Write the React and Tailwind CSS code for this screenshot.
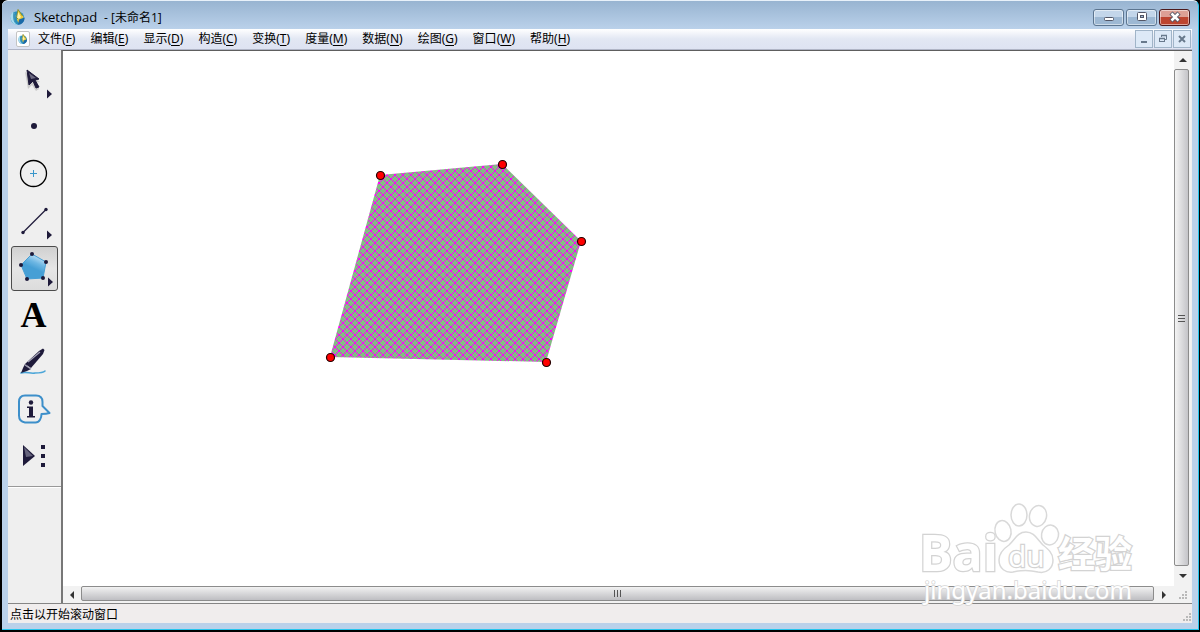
const menus = [
  ["文件", "F"],
  ["编辑", "E"],
  ["显示", "D"],
  ["构造", "C"],
  ["变换", "T"],
  ["度量", "M"],
  ["数据", "N"],
  ["绘图", "G"],
  ["窗口", "W"],
  ["帮助", "H"],
];

const points = [[317, 124], [439, 113], [518, 190], [483, 311], [267, 306]];

const INK = "#1e1a3a";

function DropLogo({ size }) {
  return (
    <svg width={size} height={size} viewBox="0 0 16 16" className="shrink-0">
      <circle cx="7.500" cy="9" r="6.800" fill="#2a8fbd" />
      <path d="M.5 8c0 4 3 8 7 8-3-2-4-5-2-9L3.500 2.500C1.500 4 .5 6 .5 8z" fill="#a9dcef" />
      <path d="M3.500 2.500L6 7c-1.500 3-1.500 6 0 8-2.500-2-3.500-6-2.500-12.500z" fill="#3c95b8" />
      <path d="M8 0l5 7c1.500 3 0 6-4 7C6.500 12 6 8 8 0z" fill="#efcb3a" />
      <path d="M8 3l3 5-3 2.500L6.500 8z" fill="#fff3a6" />
      <path d="M9 10.500l5.500-2c.3 4-2.500 7.200-6.500 7.300z" fill="#1a6aa8" />
      <path d="M8 .5L12.500 7M8 .5L6.500 9l2 1" stroke="#6b8137" strokeWidth=".8" fill="none" />
    </svg>
  );
}

// 工具按钮右下角的展开箭头
const more = <path d="M36 31.500l5 4.500-5 4.500z" fill={INK} />;

const tools = [
  {
    name: "移动箭头工具",
    icon: (
      <>
        <path d="M14 14l3 17 4-4 4 6 3-2-4-6 5-1z" fill="#888" opacity=".35" />
        <path d="M16 12l12 9-4 1 4 7-3 1-3-7-4 4z" fill={INK} stroke={INK} strokeLinejoin="round" />
        <path d="M18 15l7 5-5 1z" fill="#6d6b82" />
        {more}
      </>
    ),
  },
  { name: "点工具", icon: <circle cx="23" cy="21" r="3" fill={INK} /> },
  {
    name: "圆工具",
    icon: (
      <>
        <circle cx="22.500" cy="21.500" r="13" fill="none" stroke="#000" strokeWidth="1.300" />
        <path d="M19 21.500h7M22.500 18v7" stroke="#3996ca" />
      </>
    ),
  },
  {
    name: "线段工具",
    icon: (
      <>
        <path d="M12 33.500L35 10.500" stroke={INK} strokeWidth="1.200" />
        <circle cx="12" cy="33.500" r="1.700" fill={INK} />
        <circle cx="35" cy="10.500" r="1.700" fill={INK} />
        {more}
      </>
    ),
  },
  {
    name: "多边形工具",
    active: true,
    icon: (
      <>
        <defs>
          <linearGradient id="gloss" x1=".7" y1="0" x2=".45" y2=".55">
            <stop offset="0" stopColor="#d5ecfa" />
            <stop offset=".6" stopColor="#6eb7e3" />
            <stop offset="1" stopColor="#469fd5" />
          </linearGradient>
        </defs>
        <path d="M21 8l14 8-3 16-16 1L10 19z" fill="url(#gloss)" stroke="#469fd5" />
        {[[21, 8], [35, 16], [32, 32], [16, 33], [10, 19]].map(([x, y]) => (
          <circle key={x} cx={x} cy={y} r="2" fill={INK} />
        ))}
        <path d="M37 31.500l5 4.500-5 4.500z" fill={INK} />
      </>
    ),
  },
  { name: "文本工具" },
  {
    name: "标记工具",
    icon: (
      <>
        <path d="M10 33c5-2 9 1 14 0 4 0 8 0 10-2" fill="none" stroke="#4aa5d8" strokeWidth="1.600" strokeLinecap="round" />
        <path d="M14 24L28 11l4-2.500L33.500 10 32 14 20 28z" fill={INK} />
        <path d="M14 24l6 5-4 2-6 2 2-5z" fill={INK} />
        <path d="M14 25l6 4M17 22L29 12" stroke="#a4a3b6" strokeWidth="1.200" />
      </>
    ),
  },
  {
    name: "信息工具",
    icon: (
      <>
        <path
          d="M14 8.500h11q6.500 0 6.500 6.500v4l7 7q-3 1-8 1c0 4-2 8.500-6 8.500H14q-6-1-6-7V15q0-6.500 6-6.500z"
          fill="#efefef"
          stroke="#3d8fca"
          strokeWidth="2"
          strokeLinejoin="round"
        />
        <circle cx="20" cy="15.500" r="2.200" fill={INK} />
        <path d="M16 19.500h6V29h2v1.500h-8V29h2v-8h-2z" fill={INK} />
      </>
    ),
  },
  {
    name: "自定义工具",
    icon: (
      <>
        <path d="M12 11l12 11-12 10z" fill={INK} />
        <path d="M13 13l9 9-7 1z" fill="#65637c" />
        <path d="M30 11h4v4h-4zM30 20h4v4h-4zM30 29h4v4h-4z" fill={INK} />
      </>
    ),
  },
];

function WindowButtons() {
  const base = "flex h-[17px] w-[31px] items-center justify-center rounded-[3px] border shadow-[inset_0_0_0_1px_rgba(255,255,255,0.5)]";
  return (
    <div className="flex gap-0.5 pr-0.5">
      <button aria-label="最小化" className={`${base} border-[#5c7590] bg-linear-to-b from-[#c3d6ea] from-50% to-[#9db8d3] to-50%`}>
        <svg width="14" height="12"><rect x="2.500" y="6.500" width="9" height="3" rx="1" fill="#fff" stroke="#535666" /></svg>
      </button>
      <button aria-label="最大化" className={`${base} border-[#5c7590] bg-linear-to-b from-[#c3d6ea] from-50% to-[#9db8d3] to-50%`}>
        <svg width="14" height="12">
          <rect x="2.500" y="1.500" width="9" height="8" rx="1" fill="#fff" stroke="#535666" />
          <rect x="5.500" y="4.500" width="3" height="2" fill="#9db8d3" stroke="#535666" />
        </svg>
      </button>
      <button aria-label="关闭" className={`${base} border-[#4c1a1d] bg-linear-to-b from-[#dda095] from-50% to-[#bd4530] to-50%`}>
        <svg width="14" height="12">
          <path d="M3 2l8 8M11 2l-8 8" stroke="#535666" strokeWidth="4.500" />
          <path d="M3.500 2.500l7 7M10.500 2.500l-7 7" stroke="#fff" strokeWidth="2.500" />
        </svg>
      </button>
    </div>
  );
}

function DocumentButtons() {
  const base = "flex h-[18px] w-[18px] items-center justify-center border border-[#a0b4c8] bg-[#dde9f7]";
  return (
    <div className="flex gap-px">
      <button aria-label="最小化文档" className={base}>
        <svg width="12" height="12" className="shrink-0"><path d="M3 9h6" stroke="#68798c" strokeWidth="2" /></svg>
      </button>
      <button aria-label="还原文档" className={base}>
        <svg width="12" height="12" fill="none" stroke="#68798c" className="shrink-0">
          <path d="M4.500 4V2.500h5v4H8" />
          <path d="M4 2.500h6M2 5.500h6" strokeWidth="1.500" />
          <rect x="2.500" y="5.500" width="5" height="3" />
        </svg>
      </button>
      <button aria-label="关闭文档" className={base}>
        <svg width="12" height="12" className="shrink-0"><path d="M3 3l6 6M9 3L3 9" stroke="#68798c" strokeWidth="2" /></svg>
      </button>
    </div>
  );
}

function Grip() {
  return (
    <svg width="10" height="10" className="shrink-0" fill="#b9b9b9">
      <path d="M7 0h2v2H7zM4 3h2v2H4zM7 3h2v2H7zM1 6h2v2H1zM4 6h2v2H4zM7 6h2v2H7z" />
    </svg>
  );
}

function Watermark() {
  return (
    <svg width="230" height="110" className="pointer-events-none absolute right-11 bottom-4" aria-hidden="true">
      <g fill="#fff" stroke="#d9d9d9" strokeWidth="1.500">
        <ellipse cx="85" cy="34" rx="8" ry="10.500" transform="rotate(-12 85 34)" />
        <ellipse cx="101" cy="18" rx="8" ry="11" />
        <ellipse cx="120" cy="19" rx="8.500" ry="10.500" transform="rotate(12 120 19)" />
        <ellipse cx="132" cy="38" rx="8.500" ry="10" transform="rotate(10 132 38)" />
        <path d="M108 35c-9 0-11 8-17 13-6 4-10 8-10 15 0 9 7 13 14 12 8-2 17-2 25 0 9 2 15-4 15-12 0-7-5-11-10-15-6-6-9-13-17-13z" />
      </g>
      <g fill="#fff" stroke="#d3d3d3" strokeWidth="2.500" paintOrder="stroke" className="font-['Open_Sans',sans-serif] font-bold">
        <text x="1" y="74" fontSize="50">Bai</text>
        <text x="90" y="70" fontSize="30" className="font-normal">du</text>
        <text x="140" y="71" fontSize="37" className="font-['Noto_Sans_CJK_SC',sans-serif]">经验</text>
      </g>
      <text x="6" y="102" fontSize="24" fill="#fff" stroke="#d6d6d6" strokeWidth="1.500" paintOrder="stroke" className="font-['Noto_Sans',sans-serif]">
        jingyan.baidu.com
      </text>
    </svg>
  );
}

export default function App() {
  return (
    <div className="flex h-screen flex-col overflow-hidden border-l-2 border-r border-b-2 border-black bg-black font-['Noto_Sans','Noto_Sans_CJK_SC',sans-serif] text-xs text-black">
      <div className="flex min-h-0 flex-1 flex-col rounded-t-md border-t border-r border-b border-t-[#e8f1fa] border-r-[#25c5ed] border-b-[#25c5ed] bg-[#bad1ea] bg-linear-to-b from-[#98b4d1] to-[#bad1ea] to-[28px] px-1.5 pb-1.5">
        {/* 标题栏 */}
        <header className="flex h-7 shrink-0 items-center justify-between">
          <div className="flex items-center gap-2 pl-0.5 pt-1">
            <DropLogo size={16} />
            <h1 className="whitespace-pre font-['Open_Sans','Noto_Sans_CJK_SC',sans-serif] text-[13px] leading-4">
              Sketchpad  <span className="text-xs">- [未命名1]</span>
            </h1>
          </div>
          <div className="pt-1"><WindowButtons /></div>
        </header>

        <div className="relative flex min-h-0 flex-1 flex-col bg-[#efefef]">
          {/* 菜单栏 */}
          <nav className="flex h-5 shrink-0 items-center bg-linear-to-b from-white via-[#e2e7f3] to-[#dee3f2] pr-px pl-2">
            <div className="mr-2 flex h-4 w-3.5 items-center justify-center rounded-xs border border-[#c4c4c4] bg-white">
              <DropLogo size={10} />
            </div>
            <div className="flex flex-1 gap-[15px]">
              {menus.map(([label, key]) => (
                <button key={key} className="whitespace-nowrap leading-4">
                  {label}(<u className="underline-offset-2">{key}</u>)
                </button>
              ))}
            </div>
            <DocumentButtons />
          </nav>
          <div className="h-px shrink-0 bg-[#b0b5c6]" />

          <div className="flex min-h-0 flex-1">
            {/* 工具箱 */}
            <aside className="w-[53px] shrink-0 pt-2">
              <div className="flex flex-col items-center gap-0.5 border-b border-[#999] pb-[7px]">
                {tools.map((tool) => (
                  <button
                    key={tool.name}
                    aria-label={tool.name}
                    className={`flex h-[45px] w-[47px] items-center justify-center rounded-[3px] border ${
                      tool.active ? "border-[#4c4c4c] bg-linear-to-b from-[#d0d0d0] via-[#e6e6e6] to-[#dcdcdc]" : "border-transparent"
                    }`}
                  >
                    {tool.icon ? (
                      <svg width="45" height="43" viewBox="1 1 45 43">{tool.icon}</svg>
                    ) : (
                      <span className="pr-0.5 pb-0.5 font-['Liberation_Serif',serif] text-4xl leading-10 font-bold">A</span>
                    )}
                  </button>
                ))}
              </div>
              <div className="h-px bg-white" />
            </aside>

            {/* 画板 */}
            <main className="flex min-w-0 flex-1 flex-col border-t border-l-2 border-t-[#5e5e5e] border-l-[#777] pr-px">
              <div className="flex min-h-0 flex-1">
                <svg className="h-full min-w-0 flex-1 bg-white">
                  <defs>
                    <pattern id="hatch" width="8" height="8" patternUnits="userSpaceOnUse">
                      <rect width="8" height="8" fill="#85b885" />
                      <path d="M-1-1l10 10M-1 9L9-1" stroke="#f0f" strokeWidth="1" />
                    </pattern>
                  </defs>
                  <polygon points={points.join(" ")} fill="url(#hatch)" />
                  {points.map(([x, y]) => (
                    <circle key={x} cx={x + 0.5} cy={y + 0.5} r="4" fill="#f00" stroke="#200" strokeWidth="1.200" />
                  ))}
                </svg>
                <div className="flex w-[17px] shrink-0 flex-col bg-[#f2f2f2]">
                  <button aria-label="向上滚动" className="flex h-[18px] items-center justify-center">
                    <svg width="8" height="5"><path d="M0 4l4-4 4 4z" fill="#333" /></svg>
                  </button>
                  <div className="mr-0.5 flex flex-1 items-center justify-center rounded-xs border border-[#8c8c8c] bg-linear-to-r from-[#f4f4f4] to-[#c4c4c8]">
                    <svg width="8" height="8"><path d="M0 1.500h7M0 4.500h7M0 7.500h7" stroke="#555" /></svg>
                  </div>
                  <button aria-label="向下滚动" className="flex h-5 items-center justify-center">
                    <svg width="8" height="5"><path d="M0 0l4 4 4-4z" fill="#333" /></svg>
                  </button>
                </div>
              </div>
              <div className="flex h-[17px] shrink-0 bg-[#f2f2f2]">
                <button aria-label="向左滚动" className="flex w-[18px] items-center justify-center">
                  <svg width="5" height="8"><path d="M4 0L0 4l4 4z" fill="#333" /></svg>
                </button>
                <div className="mb-0.5 flex flex-1 items-center justify-center rounded-xs border border-[#8c8c8c] bg-linear-to-b from-[#f2f2f2] to-[#bebec2]">
                  <svg width="8" height="8"><path d="M.5 0v7M3.500 0v7M6.500 0v7" stroke="#555" /></svg>
                </div>
                <button aria-label="向右滚动" className="flex w-5 items-center justify-center">
                  <svg width="5" height="8"><path d="M0 0l4 4-4 4z" fill="#333" /></svg>
                </button>
                <div className="flex w-[17px] items-end justify-center pb-0.5"><Grip /></div>
              </div>
            </main>
          </div>

          {/* 状态栏 */}
          <footer className="flex h-5 shrink-0 items-end justify-between border-t border-[#858585] bg-[#f0eded] pl-0.5 font-['Noto_Sans_CJK_SC',sans-serif]">
            <p className="pb-px leading-4">点击以开始滚动窗口</p>
            <Grip />
          </footer>
          <Watermark />
        </div>
      </div>
    </div>
  );
}
